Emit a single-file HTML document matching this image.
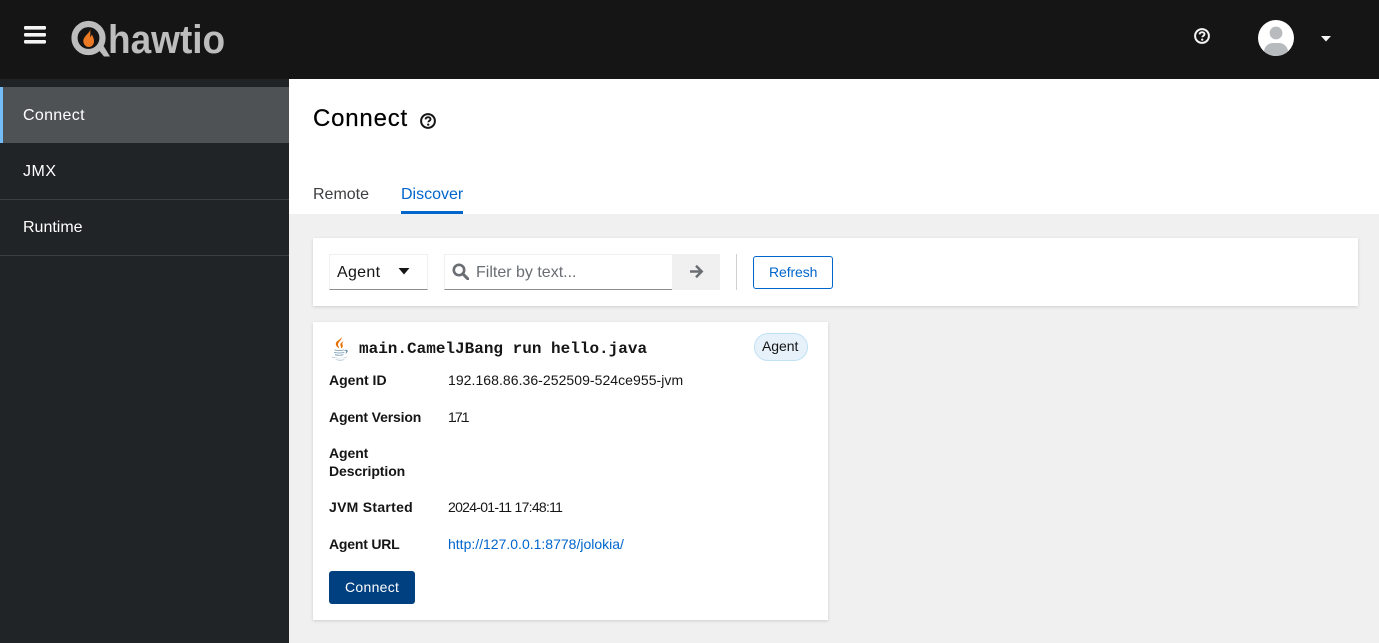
<!DOCTYPE html>
<html lang="en"><head><meta charset="utf-8"><title>Connect</title>
<style>
html,body{margin:0;padding:0;width:1379px;height:643px;overflow:hidden;background:#f0f0f0;font-family:"Liberation Sans",sans-serif;color:#151515}
.a{position:absolute;white-space:nowrap}
svg{position:absolute;display:block}
</style></head><body>
<div class="a" style="left:0;top:0;width:1379px;height:79px;background:#151515"></div>
<svg style="left:24px;top:25px" width="22" height="20"><g fill="#f5f5f5"><rect y="1" width="22" height="3.600" rx="1.200"/><rect y="8" width="22" height="3.600" rx="1.200"/><rect y="15" width="22" height="3.600" rx="1.200"/></g></svg>
<svg style="left:70px;top:20px" width="42" height="38" viewBox="0 0 42 38"><circle cx="18.500" cy="18" r="14" fill="none" stroke="#bdbdbd" stroke-width="6.200"/><path d="M27 28l6-3 7 11.500h-6z" fill="#bdbdbd"/><path d="M20 8.500c1 3.500-5 6.500-6.500 11-1 4 2 7.500 5 7.500 4 0 5.500-3 5.500-6 0-3-1.500-4.500-2-6.500-1 1-1 2-2 3 .5-3 .5-6.500 0-9z" fill="#ec7a24"/></svg>
<div class="a" style="left:108px;top:17px;font-size:40px;line-height:46px;font-weight:700;color:#bdbdbd;transform:scaleX(.925);transform-origin:0 0">hawtio</div>
<svg style="left:1194px;top:28px" width="16" height="16" viewBox="0 0 16 16"><circle cx="8" cy="8" r="6.900" fill="none" stroke="#f5f5f5" stroke-width="2"/><path d="M5.600 6.400c0-1.400 1.100-2.200 2.500-2.200 1.400 0 2.400.8 2.400 2 0 1.700-2.200 1.600-2.200 3.100" fill="none" stroke="#f5f5f5" stroke-width="1.900"/><circle cx="8.200" cy="11.600" r="1.150" fill="#f5f5f5"/></svg>
<svg style="left:1258px;top:20px" width="36" height="36" viewBox="0 0 36 36"><defs><clipPath id="c"><circle cx="18" cy="18" r="18"/></clipPath></defs><circle cx="18" cy="18" r="18" fill="#fff"/><g clip-path="url(#c)"><circle cx="18" cy="13" r="6.400" fill="#b8bbbe"/><path d="M6 36v-4c0-5 4-9 9-9h6c5 0 9 4 9 9v4z" fill="#b8bbbe"/></g></svg>
<svg style="left:1320px;top:36px" width="12" height="6"><path d="M1 0h10L6 5.500z" fill="#f5f5f5"/></svg>

<div class="a" style="left:0;top:79px;width:289px;height:564px;background:#212427"></div>
<div class="a" style="left:0;top:87px;width:289px;height:56px;background:#4f5255"></div>
<div class="a" style="left:0;top:87px;width:3px;height:56px;background:#73bcf7"></div>
<div class="a" style="left:0;top:199px;width:289px;height:1px;background:#3c3f42"></div>
<div class="a" style="left:0;top:255px;width:289px;height:1px;background:#3c3f42"></div>
<div class="a" style="left:23px;top:106px;font-size:16px;line-height:20px;color:#fff;letter-spacing:.32px">Connect</div>
<div class="a" style="left:23px;top:162px;font-size:16px;line-height:20px;color:#fff;letter-spacing:.5px">JMX</div>
<div class="a" style="left:23px;top:218px;font-size:16px;line-height:20px;color:#fff;letter-spacing:0">Runtime</div>

<div class="a" style="left:289px;top:79px;width:1090px;height:135px;background:#fff"></div>
<div class="a" style="left:313px;top:104px;font-size:24px;line-height:30px;color:#000;letter-spacing:.8px;-webkit-text-stroke:.2px #000">Connect</div>
<svg style="left:420px;top:113px" width="16" height="16" viewBox="0 0 16 16"><circle cx="8" cy="8" r="6.900" fill="none" stroke="#151515" stroke-width="2"/><path d="M5.600 6.400c0-1.400 1.100-2.200 2.500-2.200 1.400 0 2.400.8 2.400 2 0 1.700-2.200 1.600-2.200 3.100" fill="none" stroke="#151515" stroke-width="1.900"/><circle cx="8.200" cy="11.600" r="1.150" fill="#151515"/></svg>
<div class="a" style="left:313px;top:185px;font-size:16px;line-height:20px;color:#3c3f42;letter-spacing:0">Remote</div>
<div class="a" style="left:401px;top:185px;font-size:16px;line-height:20px;color:#06c;letter-spacing:0">Discover</div>
<div class="a" style="left:401px;top:211px;width:62px;height:3px;background:#06c"></div>

<div class="a" style="left:313px;top:238px;width:1045px;height:68px;background:#fff;box-shadow:0 1px 3px rgba(3,3,3,.14)"></div>
<div class="a" style="left:329px;top:254px;width:99px;height:36px;box-sizing:border-box;border:1px solid #f0f0f0;border-bottom:1px solid #8a8d90"></div>
<div class="a" style="left:337px;top:263px;font-size:16px;line-height:20px;color:#151515;letter-spacing:.3px">Agent</div>
<svg style="left:398px;top:268px" width="12" height="7"><path d="M.5 0h11L6 6.500z" fill="#151515"/></svg>
<div class="a" style="left:444px;top:254px;width:228px;height:36px;box-sizing:border-box;border:1px solid #f0f0f0;border-right:0;border-bottom:1px solid #8a8d90"></div>
<svg style="left:452px;top:263px" width="17" height="17" viewBox="0 0 17 17"><circle cx="7" cy="7" r="5.200" fill="none" stroke="#6a6e73" stroke-width="2.600"/><path d="M10.800 10.800l5 5" stroke="#6a6e73" stroke-width="3" stroke-linecap="round"/></svg>
<div class="a" style="left:476px;top:263px;font-size:16px;line-height:20px;color:#6a6e73;letter-spacing:0">Filter by text...</div>
<div class="a" style="left:672px;top:254px;width:48px;height:36px;background:#f0f0f0"></div>
<svg style="left:689px;top:264px" width="15" height="15" viewBox="0 0 15 15"><path d="M1 7.500h11.500M7 1.800l5.700 5.700L7 13.200" fill="none" stroke="#6a6e73" stroke-width="2.500"/></svg>
<div class="a" style="left:736px;top:254px;width:1px;height:36px;background:#d2d2d2"></div>
<div class="a" style="left:753px;top:256px;width:80px;height:33px;box-sizing:border-box;border:1px solid #06c;border-radius:3px"></div>
<div class="a" style="left:769px;top:264px;font-size:14px;line-height:17px;color:#06c;letter-spacing:-.1px">Refresh</div>

<div class="a" style="left:313px;top:322px;width:515px;height:298px;background:#fff;box-shadow:0 1px 3px rgba(3,3,3,.14)"></div>
<svg style="left:331px;top:337px" width="18" height="24" viewBox="0 0 18 24"><path d="M10.500 0c1 3-4 5-3.500 8 .2 1.500 1.500 2.500 1.500 3.500-1.500-1-4-2.500-3.700-5C5.100 3.800 9.500 3 10.500 0zM12.500 4c-2 1.500-3.500 2.500-3 4.500.2 1 1 2 .8 3 1.700-1.200 1.700-2.500 1.200-3.700-.4-1.100 0-2.400 1-3.800z" fill="#e76f00"/><path d="M3.500 12.500c3 .8 7 .8 9.500 0l-.3.9c-3 .6-6.500.6-9 0zM3 15c3 .8 8 .8 10.500 0l-.3.9c-3 .6-7.500.6-10 0zM4 17.300c3 .7 6 .7 8.500 0l-.3.9c-2.500.5-5.500.5-8 0zM.5 19.800c4 1.600 12.500 1.600 16-.3.300 1.800-15.500 2.500-16 .3zM13.500 13c4-1.300 4.500 2.500.5 3.800 1.500-1.200 1.800-3-.5-3zM4 22.400c3 .7 7 .7 10 0-1 1.300-8.500 1.300-10 0z" fill="#6f94ad"/></svg>
<div class="a" style="left:359px;top:340px;font-family:'Liberation Mono',monospace;font-weight:700;font-size:16px;line-height:19px;color:#151515">main.CamelJBang run hello.java</div>
<div class="a" style="left:754px;top:333px;width:54px;height:28px;box-sizing:border-box;background:#e7f1fa;border:1px solid #bee1f4;border-radius:14px"></div>
<div class="a" style="left:762px;top:338px;font-size:14px;line-height:16px;color:#151515;letter-spacing:-.05px">Agent</div>

<div class="a" style="left:329px;top:371px;font-size:14px;line-height:18px;font-weight:700;color:#151515">Agent ID</div>
<div class="a" style="left:448px;top:371px;font-size:14px;line-height:18px;color:#151515;letter-spacing:.05px">192.168.86.36-252509-524ce955-jvm</div>
<div class="a" style="left:329px;top:408px;font-size:14px;line-height:18px;font-weight:700;color:#151515;letter-spacing:-.15px">Agent Version</div>
<div class="a" style="left:448px;top:408px;font-size:14px;line-height:18px;color:#151515;letter-spacing:-2.400px">1.7.1</div>
<div class="a" style="left:329px;top:444px;font-size:14px;line-height:18px;font-weight:700;color:#151515;letter-spacing:-.08px">Agent<br>Description</div>
<div class="a" style="left:329px;top:498px;font-size:14px;line-height:18px;font-weight:700;color:#151515;letter-spacing:.28px">JVM Started</div>
<div class="a" style="left:448px;top:498px;font-size:14px;line-height:18px;color:#151515;letter-spacing:-.72px">2024-01-11 17:48:11</div>
<div class="a" style="left:329px;top:535px;font-size:14px;line-height:18px;font-weight:700;color:#151515;letter-spacing:-.2px">Agent URL</div>
<div class="a" style="left:448px;top:535px;font-size:14px;line-height:18px;color:#06c;letter-spacing:0">http://127.0.0.1:8778/jolokia/</div>
<div class="a" style="left:329px;top:571px;width:86px;height:33px;background:#004080;border-radius:3px"></div>
<div class="a" style="left:345px;top:579px;font-size:14px;line-height:17px;color:#fff;letter-spacing:.3px">Connect</div>
</body></html>
